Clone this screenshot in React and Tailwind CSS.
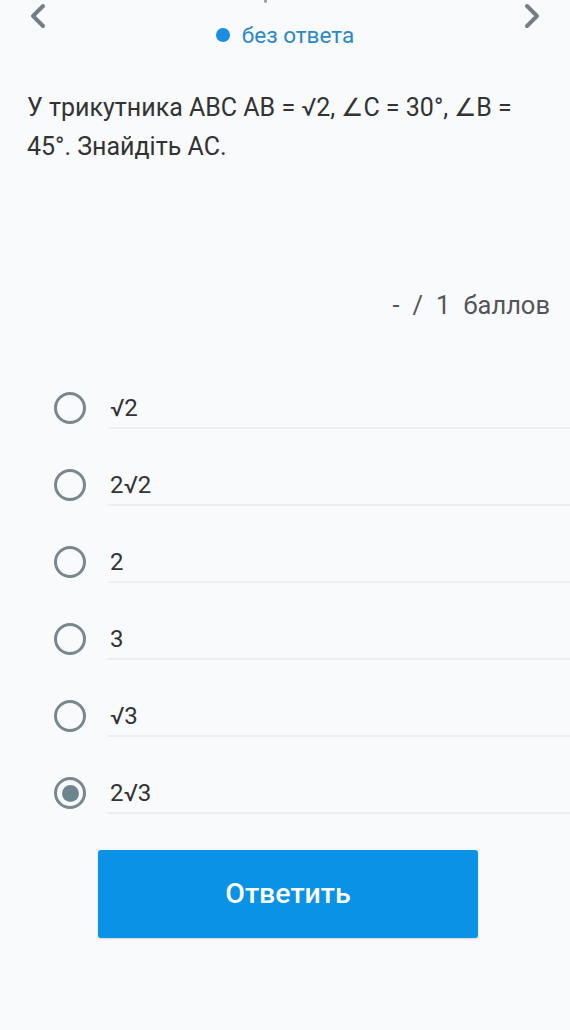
import React from "react";

const options = ["√2", "2√2", "2", "3", "√3", "2√3"];

function Chevron({ dir }) {
  return (
    <svg width="20" height="26" viewBox="0 0 20 26" fill="none">
      {dir === "left" ? (
        <path d="M15 3 L5 13 L15 23" stroke="#737f87" strokeWidth="4" strokeLinecap="round" strokeLinejoin="round" />
      ) : (
        <path d="M5 3 L15 13 L5 23" stroke="#737f87" strokeWidth="4" strokeLinecap="round" strokeLinejoin="round" />
      )}
    </svg>
  );
}

export default function App() {
  return (
    <div
      className="w-[570px] h-[1030px] bg-[#f8fafb] text-[#333] overflow-hidden relative"
      style={{ fontFamily: "Roboto, 'Noto Sans', sans-serif" }}
    >
      <div className="absolute left-[264px] top-[-5px] w-[3px] h-[8px] bg-[#9aa4aa] rounded-full" />
      <div className="flex justify-between items-start px-[28px] pt-[3px] h-[30px]">
        <Chevron dir="left" />
        <Chevron dir="right" />
      </div>
      <div className="flex justify-center items-center gap-[12px] h-[18px] -mt-[4px]">
        <span className="w-[14px] h-[14px] rounded-full bg-[#1a8ee0]" />
        <span className="text-[22.5px] leading-[26px] text-[#2b88c8]">без ответа</span>
      </div>

      <p className="mt-[44px] px-[27px] text-[25px] leading-[39px] text-[#333]">
        У трикутника ABC AB = √2, ∠C = 30°, ∠B = 45°. Знайдіть AC.
      </p>

      <div className="mt-[125px] pr-[20px] flex justify-end gap-[13px] text-[25.5px] leading-[28px] text-[#555]">
        <span>-</span>
        <span>/</span>
        <span>1</span>
        <span>баллов</span>
      </div>

      <div className="mt-[69px] flex flex-col">
        {options.map((o, i) => {
          const checked = i === 5;
          return (
            <div key={i} className="flex items-start h-[77px]">
              <div className="w-[108px] pl-[54px] pt-[4px] shrink-0">
                <span className="w-[32px] h-[32px] rounded-full border-[3px] border-[#7a878d] flex items-center justify-center">
                  {checked && <span className="w-[17px] h-[17px] rounded-full bg-[#6e8590]" />}
                </span>
              </div>
              <div className="flex-1 flex flex-col">
                <div className="h-[39px] flex items-center text-[24px] text-[#333] pl-[2px]">
                  <span className="leading-[28px]">{o}</span>
                </div>
                <div className="h-[2px] bg-[#eceff1]" />
              </div>
            </div>
          );
        })}
      </div>

      <div className="flex pl-[98px]">
        <button className="w-[380px] h-[88px] rounded-[3px] bg-[#0a92e6] text-white text-[28.5px] font-medium shadow-[0_1px_2px_rgba(0,0,0,0.15)]">
          Ответить
        </button>
      </div>
    </div>
  );
}
